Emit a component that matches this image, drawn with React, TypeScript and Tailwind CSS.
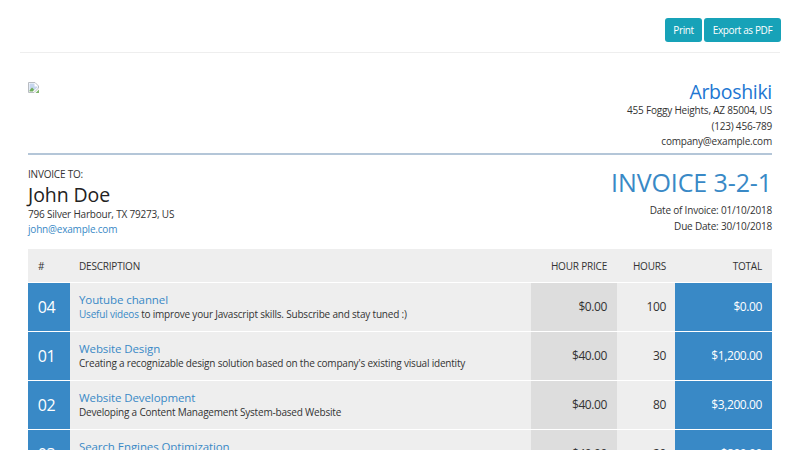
const rows = [
  { no: "04", title: "Youtube channel", price: "$0.00", hours: "100", total: "$0.00" },
  {
    no: "01",
    title: "Website Design",
    desc: "Creating a recognizable design solution based on the company's existing visual identity",
    price: "$40.00",
    hours: "30",
    total: "$1,200.00",
  },
  {
    no: "02",
    title: "Website Development",
    desc: "Developing a Content Management System-based Website",
    price: "$40.00",
    hours: "80",
    total: "$3,200.00",
  },
  {
    no: "03",
    title: "Search Engines Optimization",
    desc: "Optimize the site for search engines (SEO)",
    price: "$40.00",
    hours: "20",
    total: "$800.00",
  },
];

const BrokenImage = () => (
  <svg width="11" height="11" viewBox="0 0 11 11" className="block">
    <path d="M0.5 0.5H7L10.5 4V6L6 10.5H0.5Z" fill="#fff" stroke="#b8bcc2" />
    <path d="M1.5 1.5H6.5V4.5H9.5V5.5L6 8.5H1.5Z" fill="#c6d6ee" />
    <path d="M1.5 8.5L4 5.5L6 7.5L5 9.5H1.5Z" fill="#6fae5a" />
    <path d="M7.5 11L11 7.5V11Z" fill="#7fb56a" />
  </svg>
);

export default function App() {
  return (
    <div className="h-screen overflow-hidden bg-white px-[20px] text-[10px] leading-[20px] tracking-[-0.2px] text-[#333] [font-family:'Open_Sans','Noto_Sans',sans-serif]">
      <div className="flex h-[53px] items-end justify-end gap-[2px] border-b border-[#eeeeee] pb-[10px]">
        <button className="h-[24px] w-[37px] rounded-[3px] bg-[#17a2b8] text-[10px] tracking-[-0.4px] text-white">Print</button>
        <button className="-mr-[1px] h-[24px] w-[77px] rounded-[3px] bg-[#17a2b8] text-[10px] tracking-[-0.4px] text-white">Export as PDF</button>
      </div>

      <div className="px-[8px]">
        <div className="flex h-[102px] justify-between border-b-2 border-[#b4c6d8] pt-[26px]">
          <div className="pt-[3px]">
            <BrokenImage />
          </div>
          <div className="text-right leading-[15.5px]">
            <h2 className="mb-[-2px] text-[19.5px] leading-[26px] tracking-[-0.3px] text-[#2176d2]">Arboshiki</h2>
            <div>455 Foggy Heights, AZ 85004, US</div>
            <div>(123) 456-789</div>
            <div>company@example.com</div>
          </div>
        </div>

        <div className="flex h-[94px] justify-between pt-[12px]">
          <div className="leading-[15.5px]">
            <div>INVOICE TO:</div>
            <h2 className="-mt-[1px] text-[19.5px] leading-[25px] tracking-[-0.1px] text-[#222]">John Doe</h2>
            <div>796 Silver Harbour, TX 79273, US</div>
            <div className="text-[#3989c6]">john@example.com</div>
          </div>
          <div className="text-right leading-[15.5px]">
            <h1 className="mb-[5px] text-[25px] leading-[31px] tracking-[-0.1px] text-[#3989c6]">INVOICE 3-2-1</h1>
            <div>Date of Invoice: 01/10/2018</div>
            <div>Due Date: 30/10/2018</div>
          </div>
        </div>

        <table className="w-[744px] table-fixed border-separate border-spacing-0">
          <thead>
            <tr className="h-[34px] bg-[#eeeeee]">
              <th className="w-[42px] border-b border-white px-[10px] text-left font-normal">#</th>
              <th className="border-b border-white px-[9px] text-left font-normal">DESCRIPTION</th>
              <th className="w-[86px] border-b border-white px-[10px] text-right font-normal">HOUR PRICE</th>
              <th className="w-[58px] border-b border-white px-[9px] text-right font-normal">HOURS</th>
              <th className="w-[97px] border-b border-white px-[10px] text-right font-normal">TOTAL</th>
            </tr>
          </thead>
          <tbody>
            {rows.map((r) => (
              <tr key={r.no} className="h-[49px]">
                <td className="border-b border-white bg-[#3989c6] pr-[5px] pb-[1px] text-center text-[16px] tracking-[-0.3px] text-white">{r.no}</td>
                <td className="border-b border-white bg-[#eeeeee] px-[9px] leading-[14px]">
                  <div className="text-[11.5px] leading-[14px] tracking-[-0.1px] text-[#3989c6]">{r.title}</div>
                  {r.desc ? (
                    <div>{r.desc}</div>
                  ) : (
                    <div>
                      <span className="text-[#3989c6]">Useful videos</span> to improve your Javascript skills. Subscribe and stay tuned :)
                    </div>
                  )}
                </td>
                <td className="border-b border-white bg-[#dddddd] px-[10px] pb-[1px] text-right text-[12px] tracking-[-0.4px]">{r.price}</td>
                <td className="border-b border-white bg-[#eeeeee] px-[9px] pb-[1px] text-right text-[12px] tracking-[-0.4px]">{r.hours}</td>
                <td className="border-b border-white bg-[#3989c6] px-[10px] pb-[1px] text-right text-[12px] tracking-[-0.4px] text-white">{r.total}</td>
              </tr>
            ))}
          </tbody>
        </table>
      </div>
    </div>
  );
}
